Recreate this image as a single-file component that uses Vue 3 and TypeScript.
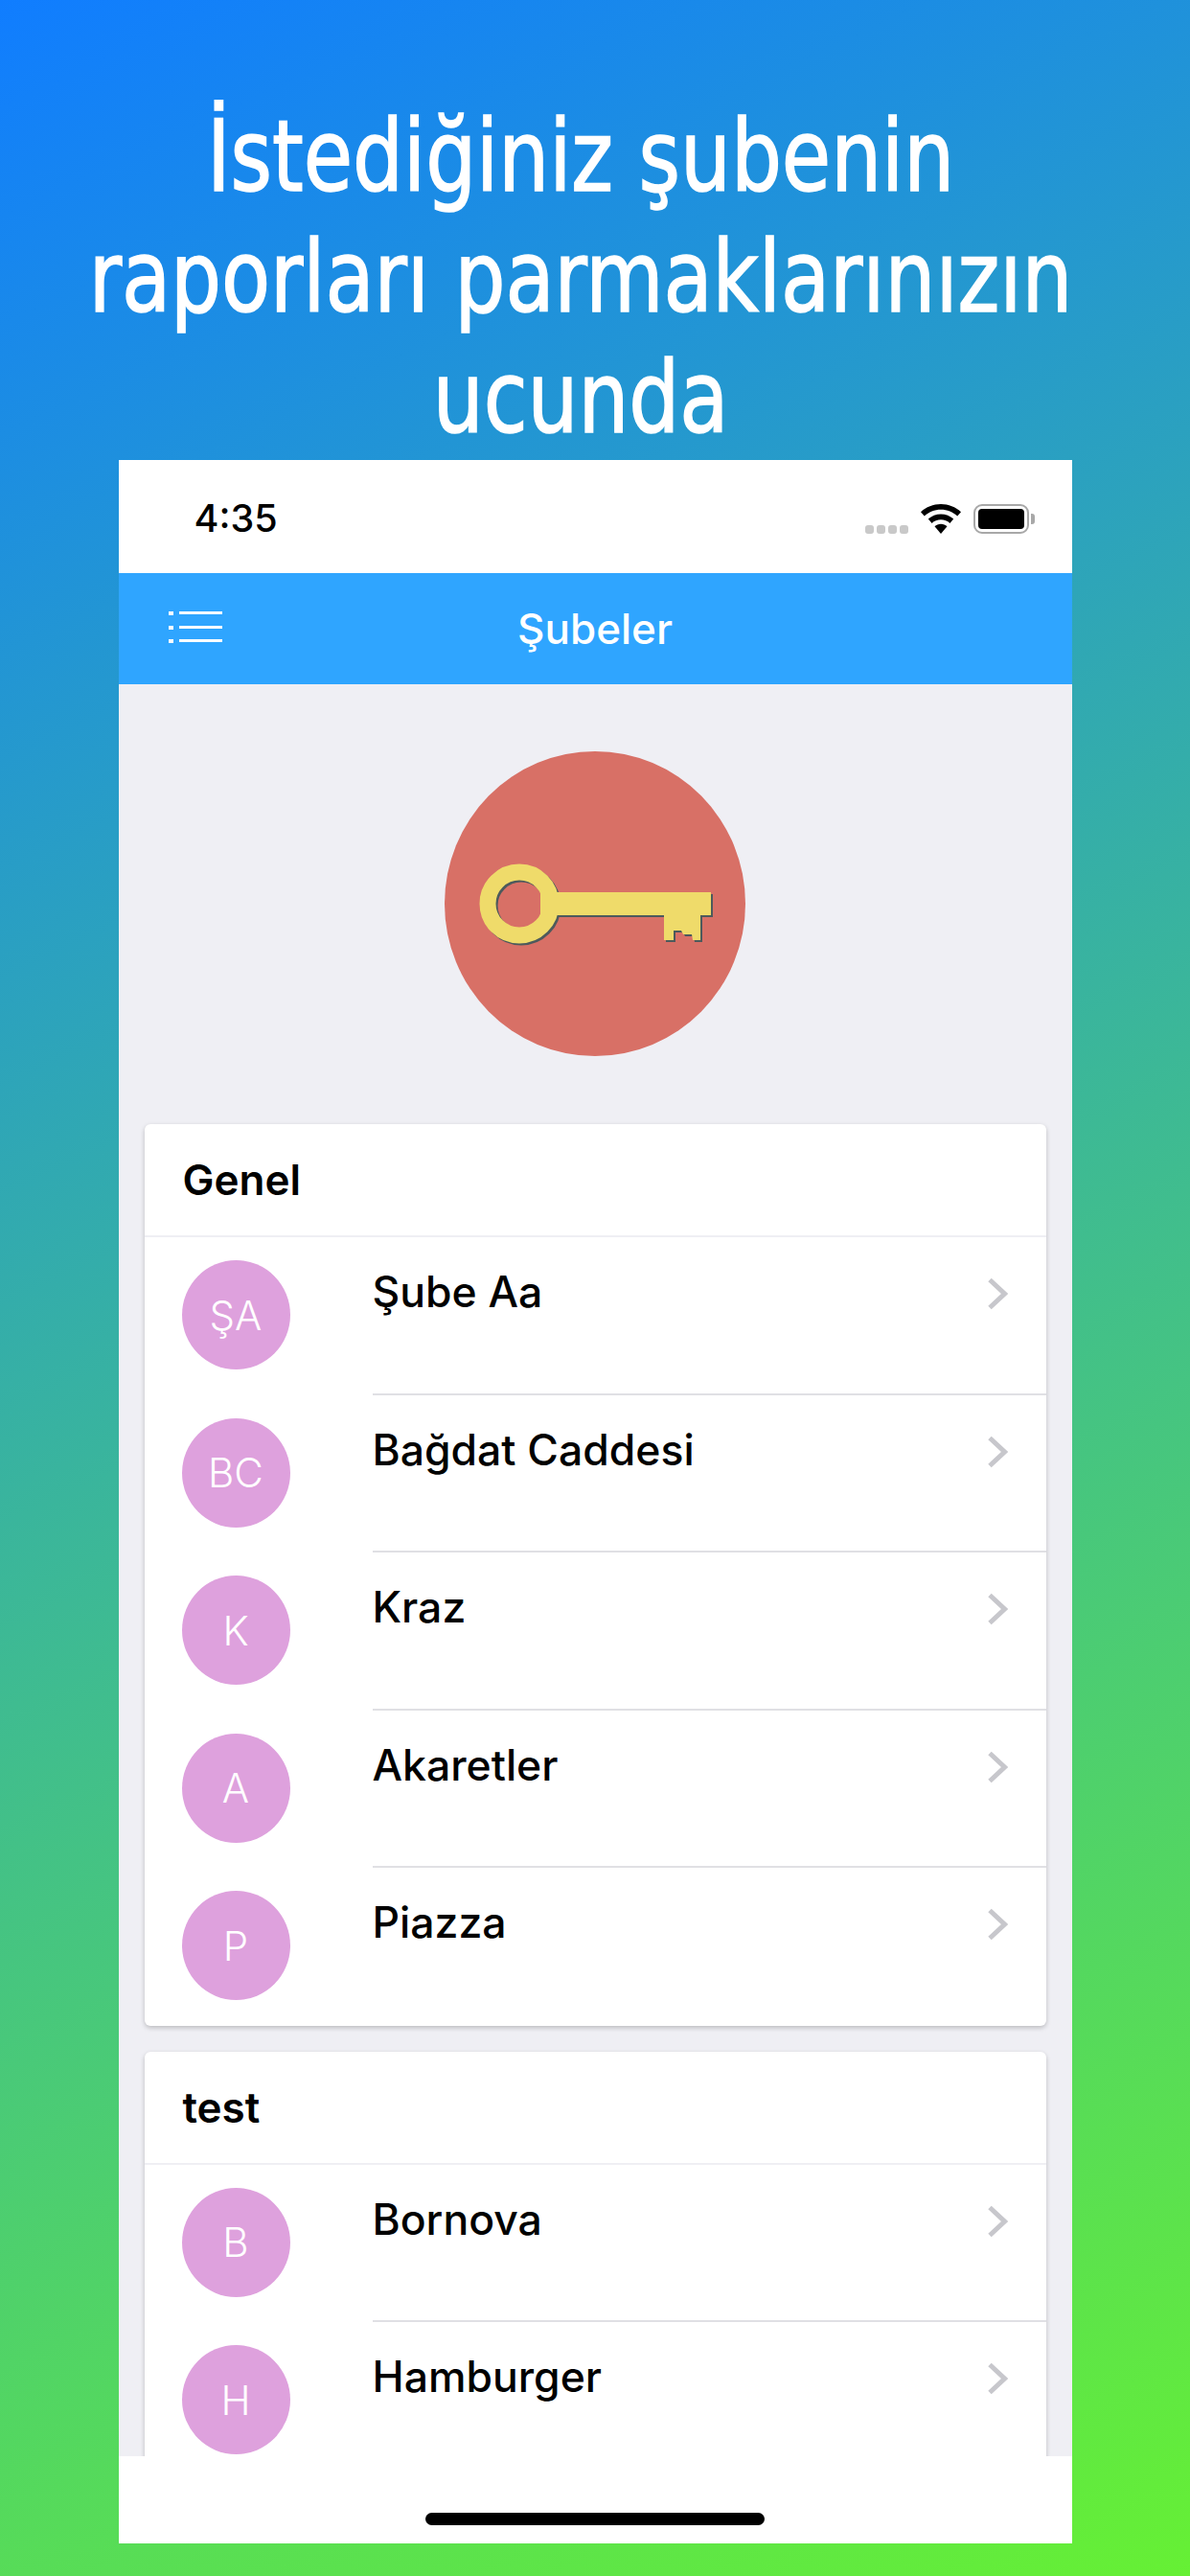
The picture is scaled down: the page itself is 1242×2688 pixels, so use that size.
<script setup lang="ts">
interface Branch {
  initials: string
  name: string
}

interface Group {
  title: string
  branches: Branch[]
}

const groups: Group[] = [
  {
    title: 'Genel',
    branches: [
      { initials: 'ŞA', name: 'Şube Aa' },
      { initials: 'BC', name: 'Bağdat Caddesi' },
      { initials: 'K', name: 'Kraz' },
      { initials: 'A', name: 'Akaretler' },
      { initials: 'P', name: 'Piazza' },
    ],
  },
  {
    title: 'test',
    branches: [
      { initials: 'B', name: 'Bornova' },
      { initials: 'H', name: 'Hamburger' },
    ],
  },
]

const keyBody = 'M100 147H278V171H267V197H259L258 191H249L247 187H239V197H229V171H100Z'
</script>

<template>
  <div class="page">
    <h1 class="headline">İstediğiniz şubenin<br>raporları parmaklarınızın<br>ucunda</h1>

    <div class="phone">
      <div class="status">
        <span class="status__time">4:35</span>
        <div class="status__icons">
          <div class="status__signal">
            <i></i><i></i><i></i><i></i>
          </div>
          <svg class="status__wifi" width="42" height="31" viewBox="0 0 42 31">
            <path d="M21 0C13 0 5.700 3 0 8.200l3.800 4.300C8.300 8.300 14.400 5.800 21 5.800s12.700 2.500 17.200 6.700L42 8.200C36.300 3 29 0 21 0z" />
            <path d="M21 10.500c-5 0-9.700 1.900-13.200 5.100l3.800 4.300c2.500-2.200 5.800-3.600 9.400-3.600s6.900 1.400 9.400 3.600l3.800-4.300C30.700 12.400 26 10.500 21 10.500z" />
            <path d="M21 20.800c-2.500 0-4.800.9-6.500 2.500L21 31l6.500-7.700c-1.700-1.600-4-2.500-6.500-2.500z" />
          </svg>
          <div class="status__battery">
            <div class="status__battery-fill"></div>
          </div>
        </div>
      </div>

      <header class="navbar">
        <svg class="navbar__menu" width="56" height="36" viewBox="0 0 56 36">
          <g fill="#fff">
            <rect x="0" y="2" width="5" height="4" />
            <rect x="11" y="2" width="45" height="3" />
            <rect x="0" y="17" width="5" height="4" />
            <rect x="11" y="17" width="45" height="3" />
            <rect x="0" y="31" width="5" height="4" />
            <rect x="11" y="31" width="45" height="3" />
          </g>
        </svg>
        <span class="navbar__title">Şubeler</span>
      </header>

      <main class="content">
        <div class="logo">
          <svg class="logo__key" width="314" height="318" viewBox="0 0 314 318">
            <ellipse cx="157" cy="159" rx="157" ry="159" fill="#d87066" />
            <g transform="translate(2 2)">
              <circle cx="78" cy="159" r="33" fill="none" stroke="#4d5a5c" stroke-width="17" />
              <path :d="keyBody" fill="#4d5a5c" />
            </g>
            <circle cx="78" cy="159" r="33" fill="none" stroke="#efdb6a" stroke-width="17" />
            <path :d="keyBody" fill="#efdb6a" />
          </svg>
        </div>

        <section v-for="group in groups" :key="group.title" class="card">
          <div class="card__head">{{ group.title }}</div>
          <div v-for="branch in group.branches" :key="branch.name" class="row">
            <div class="row__avatar">{{ branch.initials }}</div>
            <div class="row__body">
              <span class="row__name">{{ branch.name }}</span>
              <svg class="row__chevron" width="22" height="34" viewBox="0 0 22 34">
                <path d="M3 2.500L18.500 17 3 31.500" fill="none" stroke="#c7c7cc" stroke-width="5" />
              </svg>
            </div>
          </div>
        </section>
      </main>

      <div class="homebar">
        <div class="homebar__pill"></div>
      </div>
    </div>
  </div>
</template>

<style>
html,
body {
  margin: 0;
  padding: 0;
}
</style>

<style scoped>
.page {
  width: 1242px;
  height: 2688px;
  overflow: hidden;
  display: flex;
  flex-direction: column;
  align-items: center;
  background: linear-gradient(155deg, #107dff 0%, #66f034 100%);
}

.headline {
  margin: 0;
  padding: 100px 33px 0 0;
  height: 380px;
  box-sizing: content-box;
  font-family: "DejaVu Sans", sans-serif;
  font-stretch: condensed;
  font-size: 103px;
  font-weight: 400;
  line-height: 126px;
  color: #fff;
  -webkit-text-stroke: 1.5px #fff;
  text-align: center;
  white-space: nowrap;
  transform: scaleX(0.9);
}

.phone {
  width: 995px;
  height: 2174px;
  display: flex;
  flex-direction: column;
  overflow: hidden;
  background: #fff;
  font-family: Inter, sans-serif;
}

.status {
  height: 118px;
  flex: none;
  display: flex;
  align-items: center;
  justify-content: space-between;
  padding: 4px 45px 0 79px;
  box-sizing: border-box;
}

.status__time {
  font-size: 39.500px;
  font-weight: 500;
  color: #000;
}

.status__icons {
  display: flex;
  align-items: flex-end;
  gap: 13px;
}

.status__signal {
  display: flex;
  gap: 2.700px;
}

.status__signal i {
  width: 9px;
  height: 9px;
  border-radius: 3px;
  background: #c9c9c9;
}

.status__wifi {
  display: block;
}

.status__battery {
  position: relative;
  width: 58px;
  height: 31px;
  box-sizing: border-box;
  padding: 3px;
  border: 2px solid #a8a8a8;
  border-radius: 9px;
}

.status__battery::after {
  content: "";
  position: absolute;
  right: -8px;
  top: 8px;
  width: 4px;
  height: 11px;
  border-radius: 0 3px 3px 0;
  background: #a8a8a8;
}

.status__battery-fill {
  height: 100%;
  border-radius: 4px;
  background: #000;
}

.navbar {
  position: relative;
  height: 116px;
  flex: none;
  display: flex;
  align-items: center;
  justify-content: center;
  background: #2fa5ff;
}

.navbar__menu {
  position: absolute;
  left: 52px;
  top: 38px;
}

.navbar__title {
  font-size: 44px;
  font-weight: 500;
  color: #fff;
}

.content {
  flex: 1;
  min-height: 0;
  overflow: hidden;
  padding: 70px 27px 0;
  background: #efeff4;
}

.logo {
  display: flex;
  justify-content: center;
  margin-bottom: 71px;
}

.logo__key {
  display: block;
}

.card {
  margin-bottom: 27px;
  background: #fff;
  border-radius: 6px;
  box-shadow: 0 2px 5px rgba(0, 0, 0, 0.22);
  overflow: hidden;
}

.card__head {
  height: 116px;
  padding-left: 40px;
  display: flex;
  align-items: center;
  border-bottom: 2px solid #efeff4;
  font-size: 44px;
  font-weight: 600;
  color: #000;
}

.row {
  height: 164.500px;
  display: flex;
  gap: 86px;
  padding-left: 39px;
}

.row__avatar {
  width: 113px;
  height: 114px;
  flex: none;
  margin-top: 24px;
  display: flex;
  align-items: center;
  justify-content: center;
  border-radius: 50%;
  background: #dea1dd;
  color: #fff;
  font-size: 42px;
  font-weight: 300;
}

.row__body {
  flex: 1;
  display: flex;
  justify-content: space-between;
  padding: 32px 40px 0 0;
  border-bottom: 2px solid #e0e0e4;
  box-sizing: border-box;
}

.row:last-child .row__body {
  border-bottom: 0;
}

.row__name {
  font-size: 44.500px;
  font-weight: 500;
  line-height: 50px;
  color: #000;
}

.row__chevron {
  margin-top: 10px;
}

.homebar {
  height: 91px;
  flex: none;
  display: flex;
  justify-content: center;
  padding-top: 59px;
  box-sizing: border-box;
  background: #fff;
}

.homebar__pill {
  width: 354px;
  height: 13px;
  border-radius: 7px;
  background: #000;
}
</style>
